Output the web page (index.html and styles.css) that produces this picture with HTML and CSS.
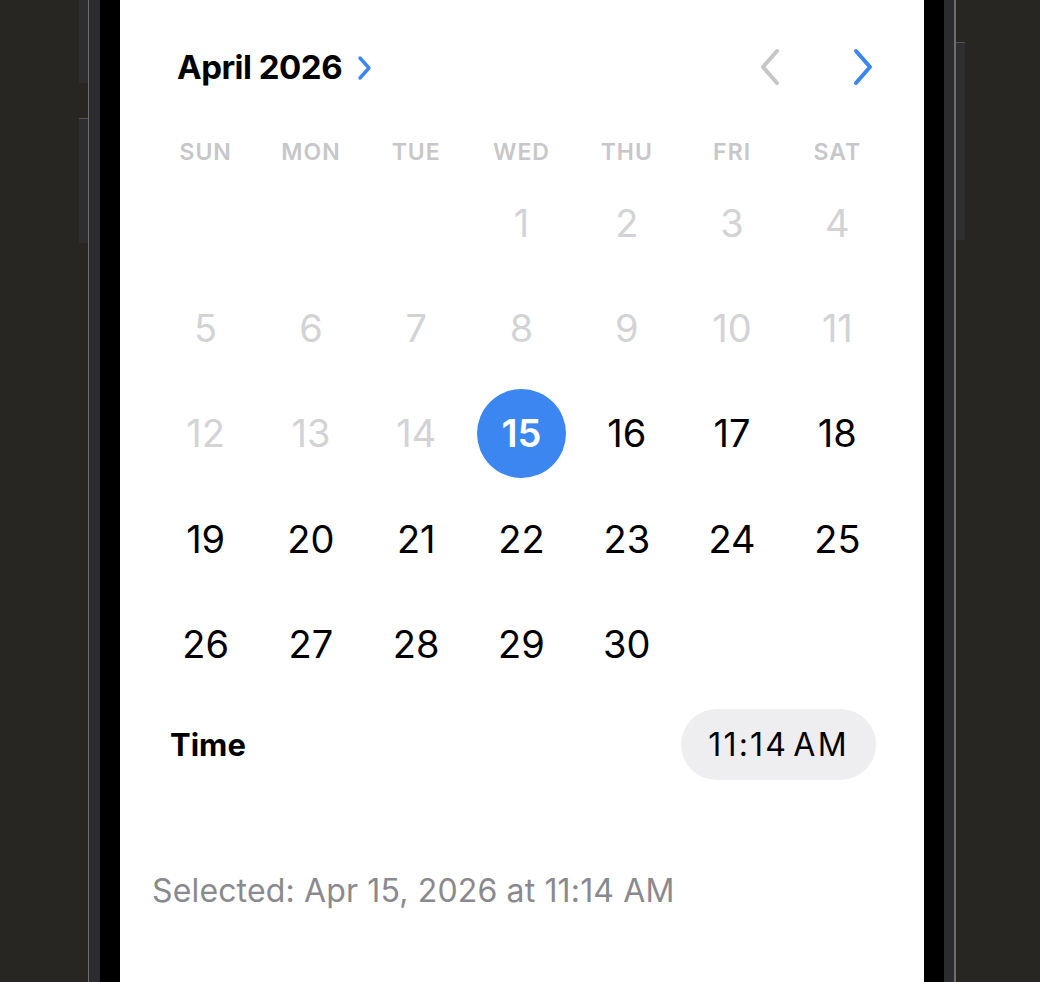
FILE: index.html
```html
<!DOCTYPE html>
<html>
<head>
<meta charset="utf-8">
<link rel="stylesheet" href="styles.css">
</head>
<body>
<div class="stage">
  <div class="side side-left">
    <div class="btn btn-l1"></div>
    <div class="btn btn-l2"></div>
  </div>
  <div class="line"></div>
  <div class="bezel bezel-l"></div>
  <div class="rim"></div>
  <div class="screen">
    <div class="header">
      <div class="month">
        <span class="month-title">April 2026</span>
        <svg class="month-chev" width="18" height="28" viewBox="0 0 18 28"><path d="M4 4 L13 14 L4 24" fill="none" stroke="#3b86f0" stroke-width="3.4" stroke-linecap="round" stroke-linejoin="round"/></svg>
      </div>
      <div class="nav">
        <svg class="nav-btn" width="28" height="40" viewBox="0 0 28 40"><path d="M20 4 L6 20 L20 36" fill="none" stroke="#c6c6c8" stroke-width="4" stroke-linecap="round" stroke-linejoin="round"/></svg>
        <svg class="nav-btn" width="28" height="40" viewBox="0 0 28 40"><path d="M8 4 L22 20 L8 36" fill="none" stroke="#3b86f0" stroke-width="4" stroke-linecap="round" stroke-linejoin="round"/></svg>
      </div>
    </div>
    <div class="weekdays">
      <div>SUN</div><div>MON</div><div>TUE</div><div>WED</div><div>THU</div><div>FRI</div><div>SAT</div>
    </div>
    <div class="days">
      <div class="day"></div><div class="day"></div><div class="day"></div>
      <div class="day past">1</div><div class="day past">2</div><div class="day past">3</div><div class="day past">4</div>
      <div class="day past">5</div><div class="day past">6</div><div class="day past">7</div><div class="day past">8</div><div class="day past">9</div><div class="day past">10</div><div class="day past">11</div>
      <div class="day past">12</div><div class="day past">13</div><div class="day past">14</div><div class="day"><span class="sel">15</span></div><div class="day">16</div><div class="day">17</div><div class="day">18</div>
      <div class="day">19</div><div class="day">20</div><div class="day">21</div><div class="day">22</div><div class="day">23</div><div class="day">24</div><div class="day">25</div>
      <div class="day">26</div><div class="day">27</div><div class="day">28</div><div class="day">29</div><div class="day">30</div><div class="day"></div><div class="day"></div>
    </div>
    <div class="time-row">
      <span class="time-label">Time</span>
      <span class="time-pill">11:14 AM</span>
    </div>
    <div class="selected">Selected: Apr 15, 2026 at 11:14 AM</div>
  </div>
  <div class="rim"></div>
  <div class="bezel bezel-r"></div>
  <div class="line line-r"></div>
  <div class="side side-right">
    <div class="btn btn-r1"></div>
  </div>
</div>
</body>
</html>
```
FILE: styles.css
```css
html, body {
  margin: 0;
  padding: 0;
  background: #282622;
  width: 1040px;
  height: 982px;
  overflow: hidden;
}
.stage {
  display: flex;
  height: 982px;
  font-family: Inter, "Noto Sans", sans-serif;
}
.side {
  display: flex;
  flex-direction: column;
}
.side-left {
  width: 88px;
  align-items: flex-end;
}
.side-right {
  flex: 1;
  align-items: flex-start;
}
.btn {
  width: 9px;
  background: #2e2e30;
  border-top: 1px solid #555557;
  box-sizing: border-box;
}
.btn-l1 { height: 83px; border-top: none; }
.btn-l2 { height: 125px; margin-top: 35px; }
.btn-r1 { height: 198px; margin-top: 42px; }
.line { width: 1px; background: #6d6d6f; }
.line-r { width: 2px; }
.bezel { background: #2c2c2e; }
.bezel-l { width: 11px; }
.bezel-r { width: 10px; }
.rim { width: 20px; background: #000; }
.screen {
  width: 804px;
  background: #fff;
  display: flex;
  flex-direction: column;
  padding: 0 34px 0 33px;
  box-sizing: border-box;
}
.header {
  margin-top: 30px;
  height: 74px;
  display: flex;
  align-items: center;
  justify-content: space-between;
  padding: 0 14px 0 24px;
}
.month {
  display: flex;
  align-items: center;
  gap: 14px;
}
.month-title {
  font-size: 33px;
  font-weight: 700;
  color: #000;
  letter-spacing: -0.5px;
}
.month-chev { margin-top: 2px; }
.nav {
  display: flex;
  gap: 63px;
  align-items: center;
}
.weekdays {
  margin-top: 30px;
  height: 36px;
  display: grid;
  grid-template-columns: repeat(7, 1fr);
  align-items: center;
  text-align: center;
  font-size: 23px;
  font-weight: 600;
  color: #c7c7c9;
  letter-spacing: 1px;
}
.days {
  display: grid;
  grid-template-columns: repeat(7, 1fr);
  grid-auto-rows: 105.3px;
}
.day {
  display: flex;
  align-items: center;
  justify-content: center;
  font-size: 38px;
  font-weight: 400;
  color: #000;
}
.day.past { color: #d3d3d5; }
.sel {
  width: 89px;
  height: 89px;
  border-radius: 50%;
  background: #3b86f0;
  color: #fff;
  font-weight: 600;
  display: flex;
  align-items: center;
  justify-content: center;
}
.time-row {
  margin-top: 13px;
  height: 71px;
  display: flex;
  align-items: center;
  justify-content: space-between;
  padding: 0 14px 0 17px;
}
.time-label {
  font-size: 31px;
  font-weight: 700;
  color: #000;
}
.time-pill {
  height: 71px;
  width: 195px;
  border-radius: 36px;
  background: #eeeef0;
  display: flex;
  align-items: center;
  justify-content: center;
  font-size: 32px;
  letter-spacing: 2.2px;
  word-spacing: -6px;
  color: #000;
}
.selected {
  margin-top: 91px;
  line-height: 40px;
  font-size: 32px;
  letter-spacing: 0.15px;
  color: #8a8a8e;
  margin-left: -1px;
}
```
